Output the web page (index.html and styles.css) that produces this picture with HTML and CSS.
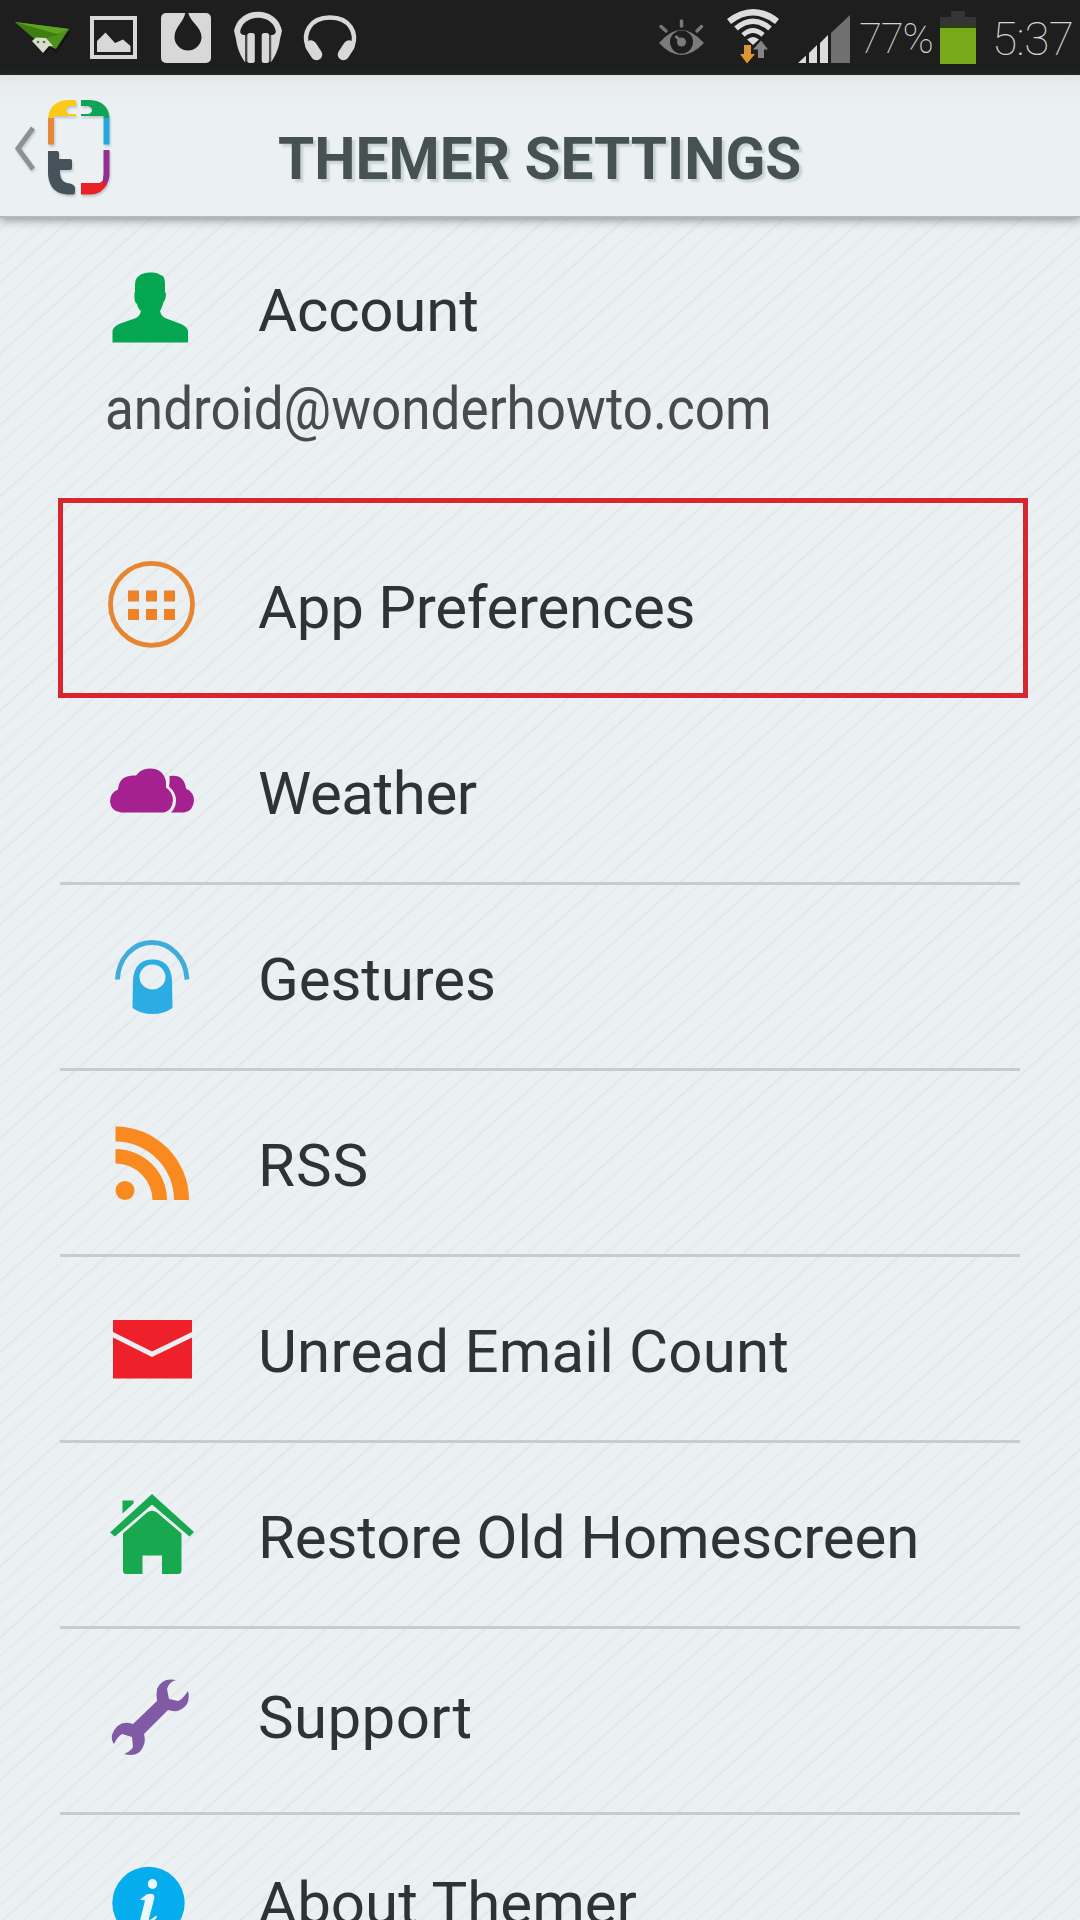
FILE: index.html
```html
<!DOCTYPE html>
<html lang="en">
<head>
<meta charset="utf-8">
<title>Themer Settings</title>
<link rel="stylesheet" href="styles.css">
</head>
<body>
<div class="status">
  <svg class="status-left" width="370" height="75" viewBox="0 0 370 75">
    <path d="M24 26 45 54 51 48 57 54 61 46 71 32Z" fill="#111" opacity=".6"/>
    <path d="M15 22 69 29 56 49 37 41Z" fill="#4f901b"/>
    <path d="M15 22 60 34 37 41Z" fill="#3f7d12"/>
    <path d="M15 22 69 29 57 34Z" fill="#5fa31f"/>
    <path d="M32 41 36 37.500 46 38 53 46 49 46 43 53Z" fill="#d5dfcc"/>
    <circle cx="38" cy="42" r="1.3" fill="#57793e"/><circle cx="44" cy="42" r="1.3" fill="#57793e"/>
    <rect x="92" y="18" width="43" height="39" fill="none" stroke="#d8d8d8" stroke-width="4"/>
    <path d="M97 52V41L105.500 32.500 115 43 123 39.500 130.500 46V52Z" fill="#d8d8d8"/>
    <rect x="161" y="13" width="50" height="50" rx="5" fill="#d8d8d8"/>
    <path d="M185.500 12H188C190 22 201.500 27 201.500 37A13.500 13.500 0 0 1 174.500 37C174.500 27 184 22 185.500 12Z" fill="#1e1e1e"/>
    <path d="M237 32C240 9 276 9 279 32" fill="none" stroke="#d8d8d8" stroke-width="6"/>
    <path d="M240 27C236 24 234 29 234.500 33L236 39C237 48 241 57 245 62V35Q239 36 240 27ZM276 27C280 24 282 29 281.500 33L280 39C279 48 275 57 271 62V35Q277 36 276 27Z" fill="#d8d8d8"/>
    <path d="M246 35V62M270.500 35V62" stroke="#555" stroke-width="1.500"/>
    <rect x="247.300" y="33" width="7.500" height="30" rx="2.500" fill="#d8d8d8"/><rect x="261.700" y="33" width="7.500" height="30" rx="2.500" fill="#d8d8d8"/>
    <path d="M307.500 46C303 34 309 17.500 330 17.500S357 34 352.500 46" fill="none" stroke="#d8d8d8" stroke-width="4.500"/>
    <path d="M311 46 316.500 54.500M349 46 343.500 54.500" stroke="#d8d8d8" stroke-width="11.500" stroke-linecap="round"/>
  </svg>
  <svg class="status-signal" width="220" height="75" viewBox="640 0 220 75">
    <g stroke="#777" stroke-width="3.500" stroke-linecap="round"><path d="M681.500 21V26M661 26.500 666 31M701.500 26.500 697 31"/></g>
    <path d="M659 43Q681 17 704 43Q681 67 659 43Z" fill="#7b7b7b"/>
    <circle cx="681.500" cy="42" r="11.500" fill="#1e1e1e"/><circle cx="681.500" cy="42" r="4.500" fill="#7b7b7b"/>
    <path d="M675.500 36 682 42" stroke="#7b7b7b" stroke-width="3"/>
    <g fill="none" stroke="#dcdcdc">
      <path d="M729 21.500Q753 3 777 21.500" stroke-width="6.500"/>
      <path d="M736 28.500Q753 14 770 28.500" stroke-width="5.500"/>
      <path d="M743 35Q753 26 763 35" stroke-width="5"/>
    </g>
    <path d="M747 39.500Q753 34.500 759 39.500L753 45Z" fill="#dcdcdc"/>
    <path d="M744 45H751V54H755L747 63.500 740 54H744Z" fill="#dc9636"/>
    <path d="M758 58H764V49.500H768L761 40.500 753 49.500H758Z" fill="#858585"/>
    <path d="M798 63 806 55.500V63ZM809 63V53L817 45V63ZM820 63V43L828 35V63Z" fill="#dcdcdc"/>
    <path d="M831 63V33L850 15V63Z" fill="#707070"/>
  </svg>
  <span class="percent">77%</span>
  <svg class="battery" width="36" height="75" viewBox="940 0 36 75">
    <path d="M951 11H965V17H976V28H940V17H951Z" fill="#353535"/>
    <rect x="940" y="26" width="36" height="2" fill="#28420a"/>
    <rect x="940" y="28" width="36" height="36" fill="#78a91a"/>
  </svg>
  <span class="clock">5:37</span>
</div>

<header class="header">
  <svg class="logo" width="120" height="142" viewBox="0 75 120 142">
    <path d="M33 128 18 148.500 33 169" fill="none" stroke="#8b9294" stroke-width="5"/>
    <path d="M48 118Q50 101 68 100H76V106H70Q66 107 66 110T70 114H76V116H54V118Z" fill="#fcc917"/>
    <path d="M109.500 118Q108 101 90 100H81V106H88Q92 107 92 110T88 114H81V116H103.500V118Z" fill="#0da456"/>
    <path d="M48 118H54V144.500H48Z" fill="#e6883a"/>
    <path d="M103.500 118H109.500V144.500H103.500Z" fill="#22a9df"/>
    <path d="M103.500 150H109.500V174Q109.500 181 105 187L101 184Q103.500 180 103.500 174Z" fill="#932f8d"/>
    <path d="M81 183H97Q101 183 102 181L107 184Q102 194 91 194.500H81Z" fill="#ea2027"/>
    <path d="M48 151H57Q59 151 59 153V159H70Q72 159 72 161V168Q72 170 70 170H60V174Q61 183 70 183.500Q75 185 75 188V192Q75 194.500 73 194.500H67Q49 193 48 174Z" fill="#46535a"/>
  </svg>
  <h1 class="title"><span class="title-text">THEMER SETTINGS</span></h1>
</header>

<main class="settings">
  <section class="account">
    <div class="account-head">
      <svg class="icon" width="90" height="90" viewBox="106 262 90 90"><path d="M135 285Q135 273 150 272.500Q158 272 160 275Q165 275 165 284V292Q167 293 165 300Q163 302 163 304Q161 310 160 311Q161 316 165 318L181 324Q188 327 188 332V342.500H112.500V332Q112.500 327 119 324L136 318Q140 316 141 311Q138 309 137 304Q134 302 134.500 295Q134 293 135 292Z" fill="#05a651"/></svg>
      <span class="label account-label">Account</span>
    </div>
    <p class="email"><span class="email-text">android@wonderhowto.com</span></p>
  </section>
  <ul class="list">
    <li class="row highlighted">
      <svg class="icon" width="90" height="90" viewBox="106 559 90 90"><circle cx="151.500" cy="604.300" r="41" fill="none" stroke="#e78632" stroke-width="4.800"/><path d="M128 590.500h11v11h-11zM146 590.500h11v11h-11zM164 590.500h11v11h-11zM128 609h11v11h-11zM146 609h11v11h-11zM164 609h11v11h-11z" fill="#ec8427"/></svg>
      <span class="label label-preferences">App Preferences</span>
    </li>
    <li class="row">
      <svg class="icon" width="90" height="90" viewBox="106 744.500 90 90"><path d="M121 812Q111 811 110 801Q110 792 118 789Q119 774 136 775Q141 768 150 768Q163 768 166 781V787Q173 792 173 800Q172 810 164 812Z" fill="#a4218f"/><path d="M169.500 775.500Q184 773 186 788Q194 792 194 800Q193 811 184 812H171Q176 807 176 800Q176 792 169 786Q170 780 169.500 775.500Z" fill="#a4218f"/></svg>
      <span class="label label-weather">Weather</span>
    </li>
    <li class="row">
      <svg class="icon" width="90" height="90" viewBox="106 931 90 90"><path d="M117.500 979.500Q118 964 128 953Q138 942.500 152 942.500T176 953Q186 963 187 979.500" fill="none" stroke="#3facd9" stroke-width="4.800"/><path fill-rule="evenodd" d="M132.500 1008L133 980C134 966 141 959.500 152.500 959.500S171 966 172 980L172.500 1008Q164 1014 152.500 1014T132.500 1008ZM139.500 977A13 12.500 0 1 0 165.500 977A13 12.500 0 1 0 139.500 977Z" fill="#2bade3"/></svg>
      <span class="label label-gestures">Gestures</span>
    </li>
    <li class="row">
      <svg class="icon" width="90" height="90" viewBox="106 1117 90 90"><g fill="#f98a20"><circle cx="125" cy="1190.500" r="9.500"/><path d="M115.500 1149A51.500 51 0 0 1 167 1200H152.500A37 37 0 0 0 115.500 1163.500Z"/><path d="M115.500 1126.500A73.500 73.500 0 0 1 189 1200H174A58.500 58.500 0 0 0 115.500 1141.500Z"/></g></svg>
      <span class="label label-rss">RSS</span>
    </li>
    <li class="row">
      <svg class="icon" width="90" height="90" viewBox="106 1303 90 90"><path d="M113 1320H192V1332L152 1351.500 113 1332ZM113 1337.500 152 1357 192 1337.500V1378.500H113Z" fill="#ee2029"/></svg>
      <span class="label label-unread">Unread Email Count</span>
    </li>
    <li class="row">
      <svg class="icon" width="90" height="90" viewBox="106 1488.500 90 90"><g fill="#18a850"><path d="M110 1532 152 1493.500 194 1531.500 189.500 1536 152 1504 115 1536Z"/><path d="M122.500 1500H133.500V1503L122.500 1513Z"/><path d="M123 1533 147 1512Q152 1508.500 157 1512L181.500 1533V1570Q181.500 1573.500 178 1573.500H162V1555H142.500V1573.500H126Q123 1573.500 123 1570Z"/></g></svg>
      <span class="label label-restore">Restore Old Homescreen</span>
    </li>
    <li class="row raised">
      <svg class="icon" width="90" height="90" viewBox="106 1675 90 90"><path d="M176 1680Q162 1677 157 1689Q156 1695 157 1701L133 1724Q118 1719 112 1735Q111 1740 114 1744Q118 1736 122 1734L132 1737 133 1747Q131 1751 124 1754Q138 1758 143 1747Q146 1741 144 1734L168 1710Q180 1714 187 1704Q190 1697 188 1691Q182 1700 178 1701L169 1699 167 1689Q169 1682 176 1680Z" fill="#805aa5"/></svg>
      <span class="label label-support">Support</span>
    </li>
    <li class="row raised">
      <svg class="icon" width="90" height="90" viewBox="106 1860.500 90 90"><circle cx="148.500" cy="1902.500" r="36.200" fill="#06adee"/><ellipse cx="152.500" cy="1883.500" rx="4.700" ry="5" fill="#eaf7fc"/><path d="M140 1899 146.500 1894Q156 1891 154 1899L149 1918Q148 1922 156 1915L157 1917Q148 1927 142 1924Q139 1922 141 1916L145 1900Z" fill="#eaf7fc"/></svg>
      <span class="label">About Themer</span>
    </li>
  </ul>
</main>
</body>
</html>
```
FILE: styles.css
```css
* {
  box-sizing: border-box;
}

body {
  margin: 0;
  width: 1080px;
  height: 1920px;
  overflow: hidden;
  font-family: Roboto, "Liberation Sans", sans-serif;
  color: #2e3335;
  background-color: #ebf0f3;
  background-image: repeating-linear-gradient(138deg,
    transparent 0 10px, #e6eaed 12px, transparent 14px,
    transparent 23px, #e7ebee 25px, transparent 27px,
    transparent 36px, #e6eaed 38px, transparent 40px,
    transparent 49px, #e2e6e9 51px, transparent 53px);
}

.status {
  display: flex;
  height: 75px;
  background: #1e1e1e;
  color: #d4d4d4;
  font-weight: 100;
  white-space: nowrap;
}

.status svg {
  flex: none;
}

.status-signal {
  margin-left: 270px;
}

.percent {
  width: 81px;
  margin-left: -1px;
  font-size: 42px;
  line-height: 77px;
  letter-spacing: -1.2px;
}

.clock {
  margin-left: 16px;
  font-size: 46px;
  line-height: 78px;
  letter-spacing: -0.6px;
}

.header {
  display: flex;
  position: relative;
  height: 143px;
  background: linear-gradient(#dfe3e6, #e8ecef 8px, #ebf0f3 30px);
  border-bottom: 2px solid #b5b9bb;
  box-shadow: 0 2px 9px rgba(70, 80, 85, 0.6);
}

.logo {
  filter: drop-shadow(1px 2px 1px rgba(90, 100, 105, 0.3));
}

.title {
  margin: 0 0 0 158px;
  font-size: 60px;
  line-height: 167px;
  font-weight: 700;
  color: #465252;
  text-shadow: 3px 3px 2px #c8d3d3;
  white-space: nowrap;
}

.title-text,
.email-text {
  display: inline-block;
  transform-origin: left;
}

.title-text {
  transform: scaleX(0.975);
}

.settings {
  height: 1702px;
  overflow: hidden;
}

.account {
  height: 295px;
  padding-top: 44px;
}

.account-head {
  display: flex;
  padding-left: 106px;
}

.icon {
  display: block;
  flex: none;
  margin-right: 62px;
}

.label {
  font-size: 60px;
  line-height: 70px;
  white-space: nowrap;
}

.account-label {
  margin-top: 14px;
  letter-spacing: -0.2px;
}

.email {
  margin: 10px 0 0 105px;
  font-size: 60px;
  line-height: 94px;
  font-weight: 450;
  color: #4a4a4a;
  white-space: nowrap;
}

.email-text {
  transform: scaleX(0.884);
}

.list {
  margin: 0;
  padding: 0;
  list-style: none;
}

.row {
  display: flex;
  align-items: center;
  height: 186px;
  margin: 0 60px;
  padding: 6px 0 0 46px;
  border-bottom: 3px solid #c8cccf;
}

.row .icon {
  margin-top: -8px;
}

.raised {
  padding-top: 0;
  padding-bottom: 6px;
}

.raised .icon {
  margin-top: 4px;
}

.label-preferences {
  letter-spacing: -0.3px;
}

.label-weather {
  letter-spacing: -0.4px;
}

.label-gestures {
  letter-spacing: -0.15px;
}

.label-rss {
  letter-spacing: 1px;
}

.label-unread {
  letter-spacing: 0.2px;
}

.label-restore {
  letter-spacing: -0.15px;
}

.label-support {
  letter-spacing: 0.4px;
}

.highlighted {
  position: relative;
  border-bottom-color: transparent;
}

.highlighted::after {
  content: "";
  position: absolute;
  box-sizing: border-box;
  left: -2px;
  top: -15px;
  width: 970px;
  height: 200px;
  border: 5px solid #d6262f;
}
```
